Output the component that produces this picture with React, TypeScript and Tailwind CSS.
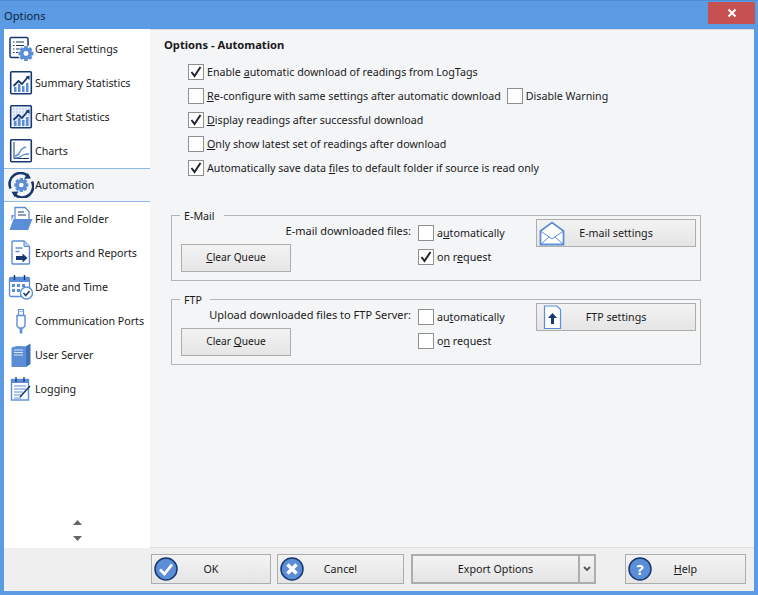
import React from "react";

const NAVY = "#16386f";
const BLUE = "#5b8ed6";
const LIGHT = "#b9cfee";

const Gear = ({ cx, cy, r }: { cx: number; cy: number; r: number }) => (
  <g>
    {[0, 45, 90, 135].map((a) => (
      <rect key={a} x={cx - r * 0.24} y={cy - r} width={r * 0.48} height={r * 2} fill={BLUE} transform={`rotate(${a} ${cx} ${cy})`} />
    ))}
    <circle cx={cx} cy={cy} r={r * 0.55} fill="none" stroke={BLUE} strokeWidth={r * 0.5} />
    <circle cx={cx} cy={cy} r={r * 0.33} fill="#fff" />
  </g>
);

const icons: Record<string, React.ReactNode> = {
  general: (
    <>
      <rect x="2" y="1.500" width="18" height="20" rx="1.500" fill="#fff" stroke={NAVY} strokeWidth="1.500" />
      <path d="M5 6h1.500M8 6h8M5 9.500h1.500M8 9.500h8M5 13h1.500M8 13h4M5 16.500h1.500M8 16.500h3" stroke={NAVY} strokeWidth="1.200" />
      <circle cx="18" cy="17.500" r="8" fill="#fff" />
      <Gear cx={18} cy={17.500} r={7.500} />
    </>
  ),
  summary: (
    <>
      <rect x="2.700" y="1.700" width="20.600" height="22" rx="1" fill="#fff" stroke={NAVY} strokeWidth="1.600" />
      <path d="M6 22v-5h2.500v5zM10 22v-8h2.500v8zM14 22v-6h2.500v6zM18 22v-9h2.500v9z" fill={BLUE} />
      <path d="M5.500 16l5-5 3.500 3 5.500-6.500" fill="none" stroke={NAVY} strokeWidth="1.800" />
      <path d="M21.500 5.500v4.500l-4-3.200z" fill={NAVY} />
    </>
  ),
  chartStats: (
    <>
      <rect x="2.700" y="1.700" width="20.600" height="22" rx="1" fill="#fff" stroke={NAVY} strokeWidth="1.600" />
      <path d="M4 5h18M4 8h18M4 11h18M4 14h18M4 17h18M4 20h18M6 3v20M9 3v20M12 3v20M15 3v20M18 3v20M21 3v20" stroke={LIGHT} strokeWidth="0.900" />
      <path d="M6 22v-5h2.500v5zM10 22v-8h2.500v8zM14 22v-6h2.500v6zM18 22v-9h2.500v9z" fill={BLUE} />
      <path d="M5.500 16l5-5 3.500 3 5.500-6.500" fill="none" stroke={NAVY} strokeWidth="1.800" />
      <path d="M21.500 5.500v4.500l-4-3.200z" fill={NAVY} />
    </>
  ),
  charts: (
    <>
      <rect x="2.700" y="1.700" width="20.600" height="22" rx="1" fill="#fff" stroke={NAVY} strokeWidth="1.600" />
      <path d="M6 4v16.500h15" fill="none" stroke={NAVY} strokeWidth="1" />
      <path d="M7 18c4 0 4-3 6-6 1.500-2 3-2.500 5-3M7 20c5 0 6-2 8-3 2-.800 4-1 6-1" fill="none" stroke={BLUE} strokeWidth="1.300" />
    </>
  ),
  automation: (
    <>
      <path d="M2.500 16.500A11 11 0 0 1 19.500 3.500" fill="none" stroke={NAVY} strokeWidth="2.600" />
      <path d="M23 6.500l-7 .300 3.800-5.800z" fill={NAVY} />
      <path d="M24 9.500A11 11 0 0 1 7 22.800" fill="none" stroke={NAVY} strokeWidth="2.600" />
      <path d="M3.500 19.800l7-.300-3.800 5.800z" fill={NAVY} />
      <Gear cx={13.300} cy={13} r={7} />
    </>
  ),
  file: (
    <>
      <path d="M7 1.500h10l4 4v9H7z" fill="#fff" stroke={BLUE} strokeWidth="1.300" />
      <path d="M10 6h6M10 9h8" stroke={NAVY} strokeWidth="1.200" />
      <path d="M6 9H3.500v6z" fill={BLUE} />
      <path d="M1.500 24l4-11h19l-4.500 11z" fill={BLUE} />
    </>
  ),
  exports: (
    <>
      <path d="M5 1h11l5.500 5.500V23a1 1 0 0 1-1 1H5a1 1 0 0 1-1-1V2a1 1 0 0 1 1-1z" fill="#fff" stroke={BLUE} strokeWidth="1.400" />
      <path d="M16 1v5.500h5.500" fill={LIGHT} stroke={BLUE} strokeWidth="1" />
      <path d="M7.500 8h7M7.500 11.500h4" stroke={BLUE} strokeWidth="1.300" />
      <path d="M8 16h6.500v-2.500l5 4.500-5 4.500V20H8z" fill={NAVY} />
    </>
  ),
  date: (
    <>
      <rect x="1.500" y="3.500" width="20" height="19" rx="1.500" fill="#fff" stroke={BLUE} strokeWidth="1.300" />
      <rect x="1.500" y="3.500" width="20" height="4.500" fill={BLUE} />
      <path d="M6.500 1v5M16.500 1v5" stroke={NAVY} strokeWidth="1.400" />
      <path d="M4 10h3v3H4zM9 10h3v3H9zM14 10h3v3h-3zM4 15h3v3H4zM9 15h3v3H9z" fill={BLUE} />
      <circle cx="18.500" cy="19" r="6" fill="#fff" stroke={BLUE} strokeWidth="1.400" />
      <path d="M15.500 19l2.200 2.500 3.800-4.500" fill="none" stroke={NAVY} strokeWidth="1.500" />
    </>
  ),
  comm: (
    <>
      <path d="M10.500 1.500h5v6h-5z" fill="#fff" stroke={BLUE} strokeWidth="1.200" />
      <path d="M11.800 3.500h.900M13.500 3.500h.900" stroke={BLUE} strokeWidth="1" />
      <path d="M9 7.500h8V18l-2 2h-4l-2-2z" fill="#fff" stroke={BLUE} strokeWidth="1.400" />
      <path d="M13 20v5.500" stroke={BLUE} strokeWidth="2.600" />
    </>
  ),
  server: (
    <>
      <path d="M3.500 5.500L9 4l9 .200V25H3.500z" fill={BLUE} />
      <path d="M18 4.200L22.500 1.500V22L18 25z" fill="#3f70b8" />
      <path d="M6 8h9M6 10.500h9M6 13h9" stroke="#dbe6f6" strokeWidth="1" />
    </>
  ),
  logging: (
    <>
      <rect x="3.500" y="3.500" width="17" height="20.500" fill="#fff" stroke={BLUE} strokeWidth="1.400" />
      <rect x="3.500" y="3.500" width="17" height="3.500" fill={BLUE} />
      <path d="M8 1v5M16 1v5" stroke={NAVY} strokeWidth="1.300" />
      <path d="M6 10h12M6 13h12M6 16h9M6 19h7M6 22h7" stroke={BLUE} strokeWidth="1" />
      <path d="M12 21l10-11" stroke={NAVY} strokeWidth="1.500" />
    </>
  ),
};

const navItems: { key: string; label: string; active?: boolean }[] = [
  { key: "general", label: "General Settings" },
  { key: "summary", label: "Summary Statistics" },
  { key: "chartStats", label: "Chart Statistics" },
  { key: "charts", label: "Charts" },
  { key: "automation", label: "Automation", active: true },
  { key: "file", label: "File and Folder" },
  { key: "exports", label: "Exports and Reports" },
  { key: "date", label: "Date and Time" },
  { key: "comm", label: "Communication Ports" },
  { key: "server", label: "User Server" },
  { key: "logging", label: "Logging" },
];

const Check = ({ checked }: { checked?: boolean }) => (
  <span className="flex h-[16px] w-[16px] shrink-0 items-center justify-center border border-[#8e8f8f] bg-white">
    {checked && (
      <svg width="14" height="14" viewBox="0 0 14 14">
        <path d="M2.500 7l3 4 6-9" fill="none" stroke="#262626" strokeWidth="2" />
      </svg>
    )}
  </span>
);

const CheckRow = ({ checked, children }: { checked?: boolean; children: React.ReactNode }) => (
  <div className="flex h-[24px] items-center gap-[3px]">
    <Check checked={checked} />
    <span className="whitespace-nowrap">{children}</span>
  </div>
);

const btn = "border border-[#adadad] bg-gradient-to-b from-[#f3f3f3] to-[#e5e5e5]";

const ClearQueue = ({ children }: { children: React.ReactNode }) => (
  <div className={`${btn} flex h-[28px] w-[110px] items-center justify-center`}>
    <span className="whitespace-pre text-[10.2px]">{children}</span>
  </div>
);

const Group = ({
  legend,
  label,
  clear,
  onRequestChecked,
  onRequest,
  autoLabel,
  icon,
  settings,
  legendWidth,
}: {
  legend: string;
  label: string;
  clear: React.ReactNode;
  onRequestChecked?: boolean;
  onRequest: React.ReactNode;
  autoLabel: React.ReactNode;
  icon: React.ReactNode;
  settings: string;
  legendWidth: string;
}) => (
  <div className="relative flex h-[66px] w-[530px] border border-[#b4b4b4] pl-[9px]">
    <span className={`absolute left-[8px] top-[-8px] h-[16px] bg-[#f4f5f7] px-[4px] leading-[16px] ${legendWidth}`}>{legend}</span>
    <div className="flex w-[230px] flex-col">
      <div className="mt-[7px] h-[16px] whitespace-nowrap text-right text-[11px] leading-[16px]">{label}</div>
      <div className="mt-[5px]">
        <ClearQueue>{clear}</ClearQueue>
      </div>
    </div>
    <div className="ml-[7px] flex w-[118px] flex-col gap-[8px] pt-[9px]">
      <div className="flex items-center gap-[3px]">
        <Check />
        <span>{autoLabel}</span>
      </div>
      <div className="flex items-center gap-[3px]">
        <Check checked={onRequestChecked} />
        <span>{onRequest}</span>
      </div>
    </div>
    <div className="pt-[3px]">
      <div className={`${btn} relative flex h-[28px] w-[160px] items-center justify-center`}>
        <span className="absolute left-[2px] top-[1px]">{icon}</span>
        <span>{settings}</span>
      </div>
    </div>
  </div>
);

const FooterBtn = ({ w, icon, children }: { w: string; icon: React.ReactNode; children: React.ReactNode }) => (
  <div className={`${btn} relative flex h-[30px] ${w} items-center justify-center`}>
    <span className="absolute left-[2px] top-[2px]">{icon}</span>
    <span>{children}</span>
  </div>
);

const RoundIcon = ({ children }: { children: React.ReactNode }) => (
  <svg width="24" height="24" viewBox="0 0 24 24">
    <circle cx="12" cy="12" r="11" fill={BLUE} stroke={NAVY} strokeWidth="1.500" />
    {children}
  </svg>
);

export default function App() {
  return (
    <div
      className="flex h-[595px] w-[758px] flex-col overflow-hidden bg-[#5a9be3] text-[10.7px] text-[#1a1a1a]"
      style={{ fontFamily: '"Noto Sans", "Open Sans", sans-serif' }}
    >
      <div className="flex h-[29px] shrink-0 items-start justify-between border-t border-[#4f8cd0] pl-[4px] pr-[3px]">
        <span className="mt-[7px] text-[11.2px] leading-[15px] text-[#10253f]">Options</span>
        <div className="mt-[1px] flex h-[22px] w-[47px] items-center justify-center bg-[#c75050]">
          <svg width="10" height="10" viewBox="0 0 10 10">
            <path d="M1.500 1.500l7 7M8.500 1.500l-7 7" stroke="#fff" strokeWidth="2" />
          </svg>
        </div>
      </div>

      <div className="mx-[4px] flex h-[562px] flex-col">
        <div className="flex h-[519px]">
          <div className="flex w-[146px] flex-col justify-between bg-white pt-[3px]">
            <div className="flex flex-col">
              {navItems.map((n) => (
                <div
                  key={n.key}
                  className={
                    n.active
                      ? "flex h-[34px] items-center gap-[1px] border-y border-[#8fbae8] bg-[#f4f5f7] pl-[4px]"
                      : "flex h-[34px] items-center gap-[1px] pl-[4px]"
                  }
                >
                  <svg width="26" height="26" viewBox="0 0 26 26" className="shrink-0">
                    {icons[n.key]}
                  </svg>
                  <span className="whitespace-nowrap">{n.label}</span>
                </div>
              ))}
            </div>
            <div className="flex flex-col items-center gap-[11px] pb-[7px] pl-[1px]">
              <svg width="9" height="5" viewBox="0 0 9 5"><path d="M4.500 0L9 5H0z" fill="#666" /></svg>
              <svg width="9" height="5" viewBox="0 0 9 5"><path d="M0 0h9L4.500 5z" fill="#666" /></svg>
            </div>
          </div>

          <div className="flex-1 border-y border-[#dcdcdc] bg-[#f4f5f7] pl-[14px]">
            <div className="mt-[6px] h-[18px] text-[11.2px] font-bold leading-[18px]">Options - Automation</div>
            <div className="ml-[24px] mt-[6px] flex flex-col">
              <CheckRow checked>
                Enable <u>a</u>utomatic download of readings from LogTags
              </CheckRow>
              <div className="flex items-center">
                <CheckRow>
                  <u>R</u>e-configure with same settings after automatic download
                </CheckRow>
                <div className="ml-[6px]">
                  <CheckRow>Disable Warning</CheckRow>
                </div>
              </div>
              <CheckRow checked>
                <u>D</u>isplay readings after successful download
              </CheckRow>
              <CheckRow>
                <u>O</u>nly show latest set of readings after download
              </CheckRow>
              <CheckRow checked>
                Automatically save data <u>f</u>iles to default folder if source is read only
              </CheckRow>
            </div>
            <div className="ml-[7px] mt-[35px] flex flex-col gap-[18px]">
              <Group
                legend="E-Mail"
                legendWidth="w-[44px]"
                label="E-mail downloaded files:"
                clear={<><u>C</u>lear Queue</>}
                autoLabel={<>a<u>u</u>tomatically</>}
                onRequest={<>on r<u>e</u>quest</>}
                onRequestChecked
                settings="E-mail settings"
                icon={
                  <svg width="26" height="25" viewBox="0 0 26 25">
                    <path d="M1.500 10L13 1.500 24.500 10v13.500h-23z" fill="#fff" stroke={BLUE} strokeWidth="1.800" />
                    <path d="M1.500 10l11.500 8 11.500-8M1.500 23.500L10 16M24.500 23.500L16 16" fill="none" stroke={BLUE} strokeWidth="1" />
                  </svg>
                }
              />
              <Group
                legend="FTP"
                legendWidth="w-[30px]"
                label="Upload downloaded files to FTP Server:"
                clear={<>Clear <u>Q</u>ueue</>}
                autoLabel={<>au<u>t</u>omatically</>}
                onRequest={<>o<u>n</u> request</>}
                settings="FTP settings"
                icon={
                  <svg width="26" height="25" viewBox="0 0 26 25">
                    <path d="M5.500 1h12.500l3.500 3.500V23.500h-16z" fill="#fff" stroke={BLUE} strokeWidth="1.200" />
                    <path d="M13.500 8l4.500 5h-3v6h-3v-6h-3z" fill={NAVY} />
                  </svg>
                }
              />
            </div>
          </div>
        </div>

        <div className="flex flex-1 items-start bg-[#efefef] pl-[147px] pt-[6px]">
          <FooterBtn
            w="w-[120px]"
            icon={
              <RoundIcon>
                <path d="M6 12.500l4.500 4.500L18 7.500" fill="none" stroke="#fff" strokeWidth="2.800" />
              </RoundIcon>
            }
          >
            OK
          </FooterBtn>
          <div className="ml-[6px]">
            <FooterBtn
              w="w-[127px]"
              icon={
                <RoundIcon>
                  <path d="M7.500 7.500l9 9M16.500 7.500l-9 9" stroke="#fff" strokeWidth="3.400" />
                </RoundIcon>
              }
            >
              Cancel
            </FooterBtn>
          </div>
          <div className="ml-[7px] flex h-[30px] w-[185px] border-2 border-[#adadad] bg-gradient-to-b from-[#f3f3f3] to-[#e5e5e5]">
            <div className="flex flex-1 items-center justify-center border-r-2 border-[#adadad]">Export Options</div>
            <div className="flex w-[14px] items-center justify-center">
              <svg width="8" height="6" viewBox="0 0 8 6">
                <path d="M1 1l3 3 3-3" fill="none" stroke="#555" strokeWidth="1.800" />
              </svg>
            </div>
          </div>
          <div className="ml-[29px]">
            <FooterBtn
              w="w-[121px]"
              icon={
                <RoundIcon>
                  <text x="12" y="17.500" textAnchor="middle" fontSize="15" fontWeight="700" fill="#fff">?</text>
                </RoundIcon>
              }
            >
              <u>H</u>elp
            </FooterBtn>
          </div>
        </div>
      </div>
    </div>
  );
}
